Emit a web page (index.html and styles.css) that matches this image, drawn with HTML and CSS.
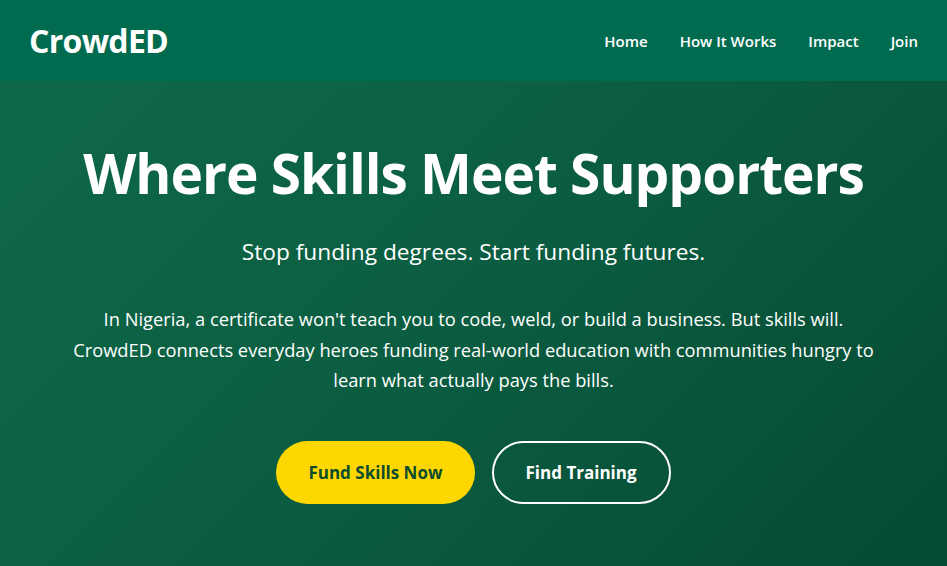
FILE: index.html
```html
<!DOCTYPE html>
<html lang="en">
<head>
<meta charset="utf-8">
<title>CrowdED</title>
<link rel="stylesheet" href="styles.css">
</head>
<body>
<header class="site-header">
  <div class="logo">CrowdED</div>
  <nav class="nav">
    <a href="#">Home</a>
    <a href="#">How It Works</a>
    <a href="#">Impact</a>
    <a href="#">Join</a>
  </nav>
</header>
<main class="hero">
  <h1 class="hero-title">Where Skills Meet Supporters</h1>
  <p class="hero-sub">Stop funding degrees. Start funding futures.</p>
  <p class="hero-text">In Nigeria, a certificate won't teach you to code, weld, or build a business. But skills will. CrowdED connects everyday heroes funding real-world education with communities hungry to learn what actually pays the bills.</p>
  <div class="actions">
    <a class="btn btn-primary" href="#">Fund Skills Now</a>
    <a class="btn btn-outline" href="#">Find Training</a>
  </div>
</main>
</body>
</html>
```
FILE: styles.css
```css
* { box-sizing: border-box; }
html, body { margin: 0; padding: 0; }
body {
  font-family: "Open Sans", "Noto Sans", sans-serif;
  color: #fff;
  min-height: 566px;
  background: linear-gradient(135deg, #0f6a49 0%, #0b5d41 50%, #054a33 100%);
  overflow: hidden;
}
.site-header {
  height: 81px;
  display: flex;
  align-items: center;
  justify-content: space-between;
  padding: 0 29px 0 29px;
  background: #016b4f;
}
.logo {
  font-size: 32px;
  font-weight: 700;
  letter-spacing: -0.7px;
}
.nav { display: flex; gap: 32px; }
.nav a {
  color: #fff;
  text-decoration: none;
  font-weight: 600;
  font-size: 15px;
}
.hero {
  text-align: center;
  padding: 56px 40px 0;
}
.hero-title {
  margin: 0;
  font-size: 55px;
  font-weight: 700;
  line-height: 1.3;
  letter-spacing: -1px;
}
.hero-sub {
  margin: 27px 0 0;
  font-size: 22.7px;
  line-height: 1.4;
}
.hero-text {
  margin: 37px auto 0;
  max-width: 820px;
  font-size: 18.3px;
  line-height: 1.67;
}
.actions {
  display: flex;
  justify-content: center;
  gap: 17px;
  margin-top: 45px;
}
.btn {
  display: inline-flex;
  align-items: center;
  justify-content: center;
  height: 63px;
  padding: 0 32px;
  border-radius: 32px;
  font-size: 17px;
  font-weight: 700;
  text-decoration: none;
}
.btn-primary { background: #fed700; color: #0b4d2c; }
.btn-outline { border: 2px solid #fff; color: #fff; }
```
